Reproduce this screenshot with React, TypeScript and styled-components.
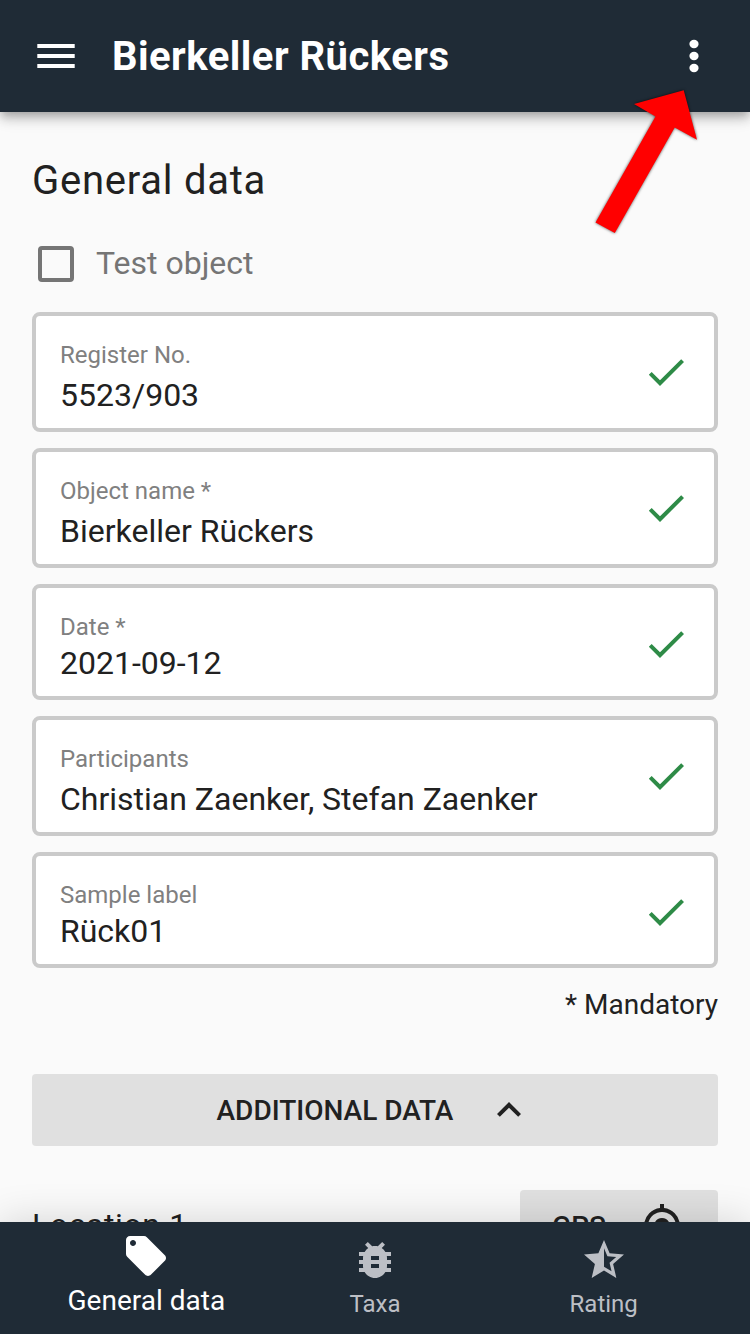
import React from "react";
import styled, { createGlobalStyle } from "styled-components";
import {
  MdBugReport,
  MdCheck,
  MdExpandLess,
  MdLocalOffer,
  MdMyLocation,
  MdStarHalf,
} from "react-icons/md";

const GlobalStyle = createGlobalStyle`
  *, *::before, *::after { box-sizing: border-box; }
  body {
    margin: 0;
    background: #fafafa;
    color: #212121;
    font-family: Roboto, "Liberation Sans", sans-serif;
  }
  button { font: inherit; border: 0; cursor: pointer; }
`;

const Screen = styled.div`
  position: relative;
  display: flex;
  flex-direction: column;
  width: 750px;
  height: 1334px;
  overflow: hidden;
  background: #fafafa;
`;

const AppBar = styled.header`
  position: relative;
  z-index: 2;
  display: flex;
  flex: none;
  align-items: center;
  height: 112px;
  padding: 0 32px;
  background: #1f2b36;
  color: #fff;
  box-shadow: 0 4px 8px -2px rgba(0, 0, 0, 0.2), 0 8px 10px 0 rgba(0, 0, 0, 0.14),
    0 2px 20px 0 rgba(0, 0, 0, 0.12);
`;

const IconButton = styled.button`
  display: flex;
  padding: 0;
  background: none;
  color: inherit;
`;

const AppTitle = styled.h1`
  flex: 1;
  margin: 2px 0 0 32px;
  font-size: 40px;
  line-height: 48px;
  font-weight: 700;
  letter-spacing: 0.47px;
`;

const Content = styled.main`
  display: flex;
  flex: 1;
  flex-direction: column;
  min-height: 0;
  overflow: hidden;
  padding: 45px 32px 0;
`;

const Heading = styled.h2`
  margin: 0;
  font-size: 40px;
  line-height: 48px;
  font-weight: 400;
  letter-spacing: 0.75px;
`;

const CheckRow = styled.label`
  display: flex;
  flex: none;
  align-items: center;
  gap: 22px;
  height: 48px;
  margin: 35px 0 24px;
  padding-left: 6px;
  color: #757575;
  font-size: 32px;
`;

const CheckBox = styled.span`
  width: 36px;
  height: 36px;
  border: 4px solid #757575;
  border-radius: 4px;
`;

const CheckLabel = styled.span`
  padding-bottom: 2px;
`;

const Fields = styled.div`
  display: flex;
  flex: none;
  flex-direction: column;
  gap: 16px;
`;

const FieldBox = styled.div<{ $compact?: boolean }>`
  display: flex;
  justify-content: space-between;
  height: ${(p) => (p.$compact ? 116 : 120)}px;
  padding: 25px 24px 0;
  border: 4px solid #cacaca;
  border-radius: 8px;
  background: #fff;
`;

const FieldText = styled.div<{ $compact?: boolean }>`
  display: flex;
  flex-direction: column;
  gap: ${(p) => (p.$compact ? 3 : 7)}px;
`;

const FieldLabel = styled.span`
  color: #808080;
  font-size: 24px;
  line-height: 28px;
`;

const FieldValue = styled.span`
  font-size: 32px;
  line-height: 38px;
`;

const FieldCheck = styled(MdCheck)`
  width: 48px;
  height: 48px;
  margin-top: 7px;
  color: #2e8b47;
`;

const Note = styled.p`
  margin: 20px 0 0;
  text-align: right;
  font-size: 28px;
  line-height: 34px;
`;

const Button = styled.button`
  display: flex;
  align-items: center;
  justify-content: center;
  flex: none;
  height: 72px;
  padding: 0 32px;
  border-radius: 4px;
  background: #e0e0e0;
  color: #212121;
  font-size: 28px;
  font-weight: 500;
  white-space: nowrap;

  svg {
    width: 48px;
    height: 48px;
    margin-left: 32px;
  }
`;

const WideButton = styled(Button)`
  margin-top: 52px;
`;

const LocationRow = styled.section`
  display: flex;
  align-items: center;
  justify-content: space-between;
  flex: none;
  margin-top: 44px;
`;

const LocationTitle = styled.h3`
  margin: 0;
  padding-bottom: 3px;
  font-size: 32px;
  line-height: 40px;
  font-weight: 400;
  letter-spacing: 0.6px;
`;

const BottomNav = styled.nav`
  position: relative;
  z-index: 2;
  display: flex;
  flex: none;
  height: 112px;
  padding: 0 32px;
  background: #1f2b36;
  box-shadow: 0 0 40px rgba(0, 0, 0, 0.16);
`;

const NavItem = styled.a<{ $active?: boolean }>`
  display: flex;
  flex: 1;
  flex-direction: column;
  align-items: center;
  padding-top: ${(p) => (p.$active ? 10 : 14)}px;
  color: ${(p) => (p.$active ? "#fff" : "#bcbfc5")};
  font-size: ${(p) => (p.$active ? 28 : 24)}px;
  line-height: ${(p) => (p.$active ? 42 : 40)}px;
  font-weight: 400;

  svg {
    width: 48px;
    height: 48px;
  }
`;

const Pointer = styled.svg`
  position: absolute;
  z-index: 3;
  top: 80px;
  left: 585px;
  width: 125px;
  height: 165px;
  filter: drop-shadow(0 0 1.5px rgba(0, 0, 0, 0.7));
`;

const fields = [
  { label: "Register No.", value: "5523/903" },
  { label: "Object name *", value: "Bierkeller Rückers" },
  { label: "Date *", value: "2021-09-12", compact: true },
  { label: "Participants", value: "Christian Zaenker, Stefan Zaenker" },
  { label: "Sample label", value: "Rück01", compact: true },
];

const navItems = [
  { label: "General data", Icon: MdLocalOffer, active: true },
  { label: "Taxa", Icon: MdBugReport },
  { label: "Rating", Icon: MdStarHalf },
];

function Field({ label, value, compact }: { label: string; value: string; compact?: boolean }) {
  return (
    <FieldBox $compact={compact}>
      <FieldText $compact={compact}>
        <FieldLabel>{label}</FieldLabel>
        <FieldValue>{value}</FieldValue>
      </FieldText>
      <FieldCheck />
    </FieldBox>
  );
}

export default function App() {
  return (
    <>
      <GlobalStyle />
      <Screen>
        <AppBar>
          <IconButton aria-label="Menu">
            <svg width="48" height="48" viewBox="0 0 48 48" fill="currentColor">
              <path d="M5.3 12h37.4v4H5.3zM5.3 22h37.4v4H5.3zM5.3 32h37.4v4H5.3z" />
            </svg>
          </IconButton>
          <AppTitle>Bierkeller Rückers</AppTitle>
          <IconButton aria-label="More">
            <svg width="48" height="48" viewBox="0 0 48 48" fill="currentColor">
              <ellipse cx="24" cy="12" rx="4.6" ry="4.2" />
              <ellipse cx="24" cy="24" rx="4.6" ry="4.2" />
              <ellipse cx="24" cy="36" rx="4.6" ry="4.2" />
            </svg>
          </IconButton>
        </AppBar>

        <Content>
          <Heading>General data</Heading>
          <CheckRow>
            <CheckBox />
            <CheckLabel>Test object</CheckLabel>
          </CheckRow>
          <Fields>
            {fields.map((f) => (
              <Field key={f.label} {...f} />
            ))}
          </Fields>
          <Note>* Mandatory</Note>
          <WideButton>
            ADDITIONAL DATA
            <MdExpandLess />
          </WideButton>
          <LocationRow>
            <LocationTitle>Location 1</LocationTitle>
            <Button>
              GPS
              <MdMyLocation />
            </Button>
          </LocationRow>
        </Content>

        <BottomNav>
          {navItems.map(({ label, Icon, active }) => (
            <NavItem key={label} $active={active}>
              <Icon />
              {label}
            </NavItem>
          ))}
        </BottomNav>

        <Pointer viewBox="585 80 125 165">
          <polygon
            points="683.7,90.3 634,104 655.5,116.5 595.5,222.5 614.8,233 674.7,127.5 697,139.8"
            fill="#f00"
          />
        </Pointer>
      </Screen>
    </>
  );
}
